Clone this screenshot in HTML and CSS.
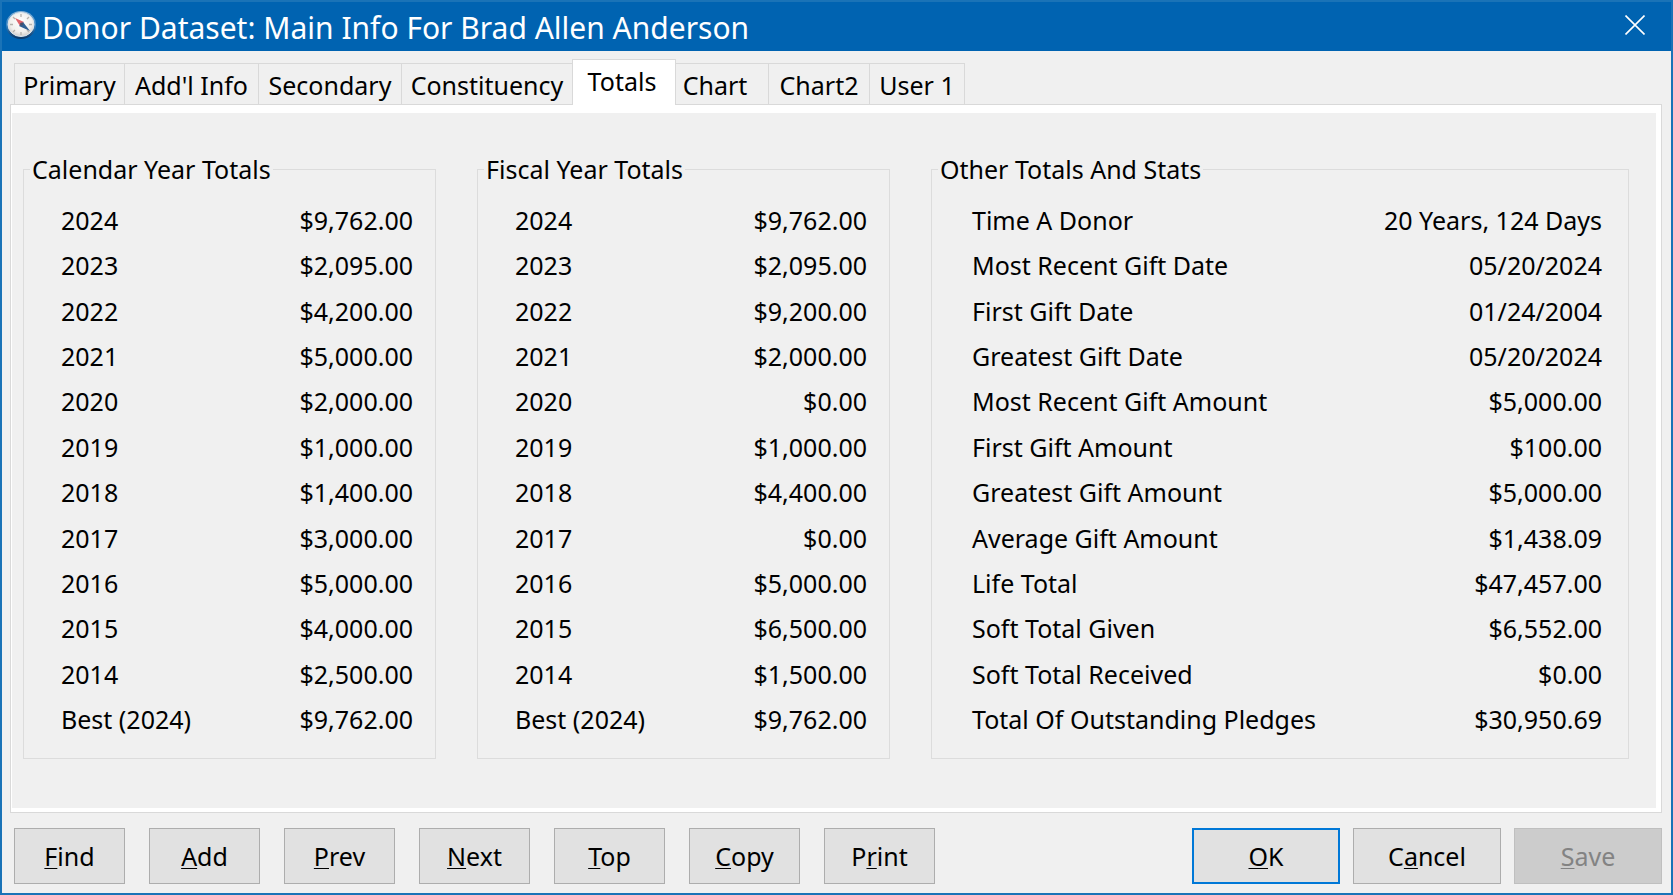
FILE: index.html
```html
<!DOCTYPE html>
<html lang="en">
<head>
<meta charset="utf-8">
<title>Donor Dataset: Main Info For Brad Allen Anderson</title>
<link rel="stylesheet" href="styles.css">
</head>
<body>
<div class="window">
  <header class="titlebar">
    <svg class="app-icon" width="32" height="30" viewBox="0 0 32 30" aria-hidden="true">
      <defs>
        <linearGradient id="rim" x1="0" y1="0" x2="0" y2="1">
          <stop offset="0" stop-color="#8fb6d6"/><stop offset="0.5" stop-color="#3b86c4"/><stop offset="1" stop-color="#0b3563"/>
        </linearGradient>
        <radialGradient id="face" cx="0.5" cy="0.4" r="0.6">
          <stop offset="0" stop-color="#ffffff"/><stop offset="0.7" stop-color="#f1efec"/><stop offset="1" stop-color="#cfccca"/>
        </radialGradient>
      </defs>
      <ellipse cx="16" cy="15" rx="15" ry="14" fill="url(#rim)"/>
      <ellipse cx="16" cy="14.500" rx="13" ry="12" fill="url(#face)" stroke="#dfe6ec" stroke-width="1"/>
      <g stroke="#b5b2ad" stroke-width="1.300"><path d="M16 4v3M16 22v3M5 14.500h3M24 14.500h3M8 7l2 2M24 22l-2-2M24 7l-2 2M8 22l2-2"/></g>
      <path d="M10 8l9 4-4 4z" fill="#e0626a"/>
      <path d="M25 21l-11-5 4-4z" fill="#2f5f93"/>
      <circle cx="16.500" cy="14" r="1.500" fill="#4a4f66"/>
    </svg>
    <h1 class="title">Donor Dataset: Main Info For Brad Allen Anderson</h1>
    <button class="close" type="button" aria-label="Close">
      <svg width="20" height="20" viewBox="0 0 20 20" aria-hidden="true"><path d="M.5 .5l19 19M19.500 .5l-19 19" stroke="#fff" stroke-width="1.600" fill="none"/></svg>
    </button>
  </header>

  <main class="content">
    <div class="tabs" role="tablist">
      <button class="tab" type="button" role="tab">Primary</button>
      <button class="tab" type="button" role="tab">Add'l Info</button>
      <button class="tab" type="button" role="tab">Secondary</button>
      <button class="tab" type="button" role="tab">Constituency</button>
      <button class="tab tab-active" type="button" role="tab" aria-selected="true">Totals</button>
      <button class="tab tab-next" type="button" role="tab">Chart</button>
      <button class="tab" type="button" role="tab">Chart2</button>
      <button class="tab tab-last" type="button" role="tab">User 1</button>
    </div>

    <div class="panel" role="tabpanel">
      <div class="groups">
        <fieldset class="group">
          <legend>Calendar Year Totals</legend>
          <table class="stats">
            <tr><th scope="row">2024</th><td>$9,762.00</td></tr>
            <tr><th scope="row">2023</th><td>$2,095.00</td></tr>
            <tr><th scope="row">2022</th><td>$4,200.00</td></tr>
            <tr><th scope="row">2021</th><td>$5,000.00</td></tr>
            <tr><th scope="row">2020</th><td>$2,000.00</td></tr>
            <tr><th scope="row">2019</th><td>$1,000.00</td></tr>
            <tr><th scope="row">2018</th><td>$1,400.00</td></tr>
            <tr><th scope="row">2017</th><td>$3,000.00</td></tr>
            <tr><th scope="row">2016</th><td>$5,000.00</td></tr>
            <tr><th scope="row">2015</th><td>$4,000.00</td></tr>
            <tr><th scope="row">2014</th><td>$2,500.00</td></tr>
            <tr><th scope="row">Best (2024)</th><td>$9,762.00</td></tr>
          </table>
        </fieldset>
        <fieldset class="group">
          <legend>Fiscal Year Totals</legend>
          <table class="stats">
            <tr><th scope="row">2024</th><td>$9,762.00</td></tr>
            <tr><th scope="row">2023</th><td>$2,095.00</td></tr>
            <tr><th scope="row">2022</th><td>$9,200.00</td></tr>
            <tr><th scope="row">2021</th><td>$2,000.00</td></tr>
            <tr><th scope="row">2020</th><td>$0.00</td></tr>
            <tr><th scope="row">2019</th><td>$1,000.00</td></tr>
            <tr><th scope="row">2018</th><td>$4,400.00</td></tr>
            <tr><th scope="row">2017</th><td>$0.00</td></tr>
            <tr><th scope="row">2016</th><td>$5,000.00</td></tr>
            <tr><th scope="row">2015</th><td>$6,500.00</td></tr>
            <tr><th scope="row">2014</th><td>$1,500.00</td></tr>
            <tr><th scope="row">Best (2024)</th><td>$9,762.00</td></tr>
          </table>
        </fieldset>
        <fieldset class="group group-wide">
          <legend>Other Totals And Stats</legend>
          <table class="stats">
            <tr><th scope="row">Time A Donor</th><td>20 Years, 124 Days</td></tr>
            <tr><th scope="row">Most Recent Gift Date</th><td>05/20/2024</td></tr>
            <tr><th scope="row">First Gift Date</th><td>01/24/2004</td></tr>
            <tr><th scope="row">Greatest Gift Date</th><td>05/20/2024</td></tr>
            <tr><th scope="row">Most Recent Gift Amount</th><td>$5,000.00</td></tr>
            <tr><th scope="row">First Gift Amount</th><td>$100.00</td></tr>
            <tr><th scope="row">Greatest Gift Amount</th><td>$5,000.00</td></tr>
            <tr><th scope="row">Average Gift Amount</th><td>$1,438.09</td></tr>
            <tr><th scope="row">Life Total</th><td>$47,457.00</td></tr>
            <tr><th scope="row">Soft Total Given</th><td>$6,552.00</td></tr>
            <tr><th scope="row">Soft Total Received</th><td>$0.00</td></tr>
            <tr><th scope="row">Total Of Outstanding Pledges</th><td>$30,950.69</td></tr>
          </table>
        </fieldset>
      </div>
    </div>

    <footer class="actions">
      <div class="nav-actions">
        <button class="btn" type="button"><u>F</u>ind</button>
        <button class="btn" type="button"><u>A</u>dd</button>
        <button class="btn" type="button"><u>P</u>rev</button>
        <button class="btn" type="button"><u>N</u>ext</button>
        <button class="btn" type="button"><u>T</u>op</button>
        <button class="btn" type="button"><u>C</u>opy</button>
        <button class="btn" type="button">P<u>r</u>int</button>
      </div>
      <div class="form-actions">
        <button class="btn btn-wide btn-default" type="submit"><u>O</u>K</button>
        <button class="btn btn-wide" type="button">C<u>a</u>ncel</button>
        <button class="btn btn-wide" type="button" disabled><u>S</u>ave</button>
      </div>
    </footer>
  </main>
</div>
</body>
</html>
```
FILE: styles.css
```css
* { box-sizing: border-box; }

body {
  margin: 0;
  background: #f0f0f0;
  color: #000;
  font: 25px/34px Tahoma, "Noto Sans", sans-serif;
}

button { font: inherit; color: inherit; }

.window {
  display: flex;
  flex-direction: column;
  min-height: 100vh;
  border: 2px solid #1a73b7;
}

.titlebar {
  display: flex;
  align-items: center;
  height: 49px;
  padding: 0 16px 0 3px;
  background: #0063b1;
  color: #fff;
}

.app-icon { margin-bottom: 4px; }

.title {
  flex: 1;
  margin: 0 0 0 5px;
  padding-top: 2px;
  font: 400 30px/44px "Segoe UI", "Noto Sans", sans-serif;
}

.close {
  display: flex;
  padding: 8px 10px 12px;
  border: 0;
  background: none;
}

.content {
  display: flex;
  flex: 1;
  flex-direction: column;
  padding: 8px 9px 9px 8px;
}

.tabs {
  display: grid;
  grid-template-columns: 110px 134px 143px 171px 104px 92px 101px 96px;
  align-items: end;
  padding-left: 4px;
}

.tab {
  height: 41px;
  padding: 2px 0 0;
  border: 1px solid #d9d9d9;
  border-width: 1px 0 0 1px;
  background: #f0f0f0;
  text-align: center;
}

.tab-active {
  z-index: 1;
  height: 46px;
  margin-bottom: -1px;
  padding: 0 4px 4px 0;
  border-width: 1px 1px 0;
  background: #fff;
}

.tab-next {
  padding-right: 14px;
  border-left: 0;
}

.tab-last { border-right-width: 1px; }

.panel {
  display: flex;
  flex: 1;
  border: 1px solid #d9d9d9;
  background: #fff;
  padding: 8px 5px 4px 1px;
}

.groups {
  display: grid;
  flex: 1;
  grid-template-columns: 413fr 413fr 698fr;
  gap: 41px;
  align-content: start;
  padding: 39px 27px 46px 11px;
  background: #f0f0f0;
}

.group {
  min-width: 0;
  margin: 0;
  padding: 11px 22px 16px 37px;
  border: 1px solid #dcdcdc;
}

.group-wide { padding: 11px 26px 16px 40px; }

.group legend {
  margin-left: -31px;
  padding: 0 2px;
}

.group-wide legend { margin-left: -34px; }

.stats {
  width: 100%;
  height: 545px;
  border-collapse: collapse;
}

.stats th,
.stats td {
  padding: 0;
  font-weight: 400;
  text-align: left;
  white-space: nowrap;
}

.stats td { text-align: right; }

.actions {
  display: flex;
  justify-content: space-between;
  padding: 15px 0 0 4px;
}

.nav-actions { display: flex; gap: 24px; }
.form-actions { display: flex; gap: 13px; }

.btn {
  width: 111px;
  height: 56px;
  padding: 0;
  border: 1px solid #adadad;
  background: #e1e1e1;
}

.btn-wide { width: 148px; }
.btn-default { border: 2px solid #0078d7; }

.btn:disabled {
  border-color: #bfbfbf;
  background: #ccc;
  color: #838383;
}

.btn u {
  text-decoration-thickness: 1px;
  text-underline-offset: 2px;
  text-decoration-skip-ink: none;
}
```
